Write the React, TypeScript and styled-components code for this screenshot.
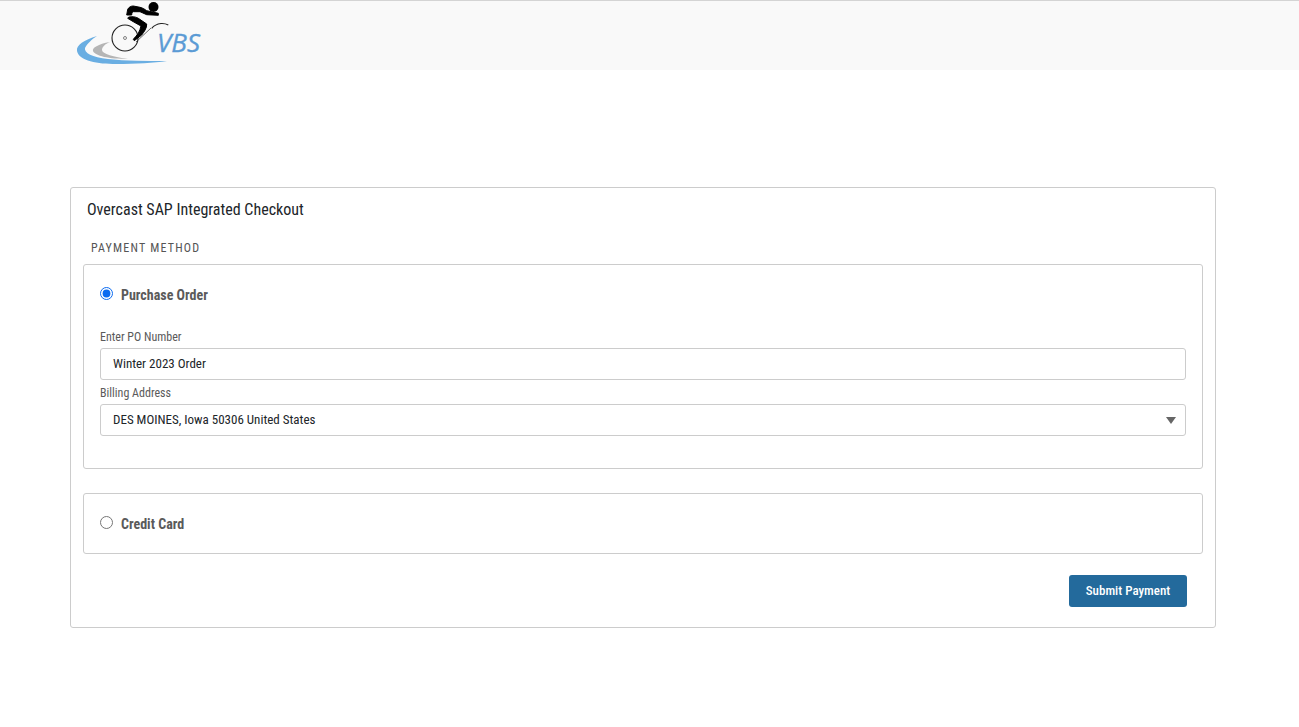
import React from "react";
import styled, { createGlobalStyle } from "styled-components";

const Global = createGlobalStyle`
  html, body { margin: 0; padding: 0; background: #fff; }
  body { font-family: "Roboto", "Liberation Sans", sans-serif; font-stretch: 75%; color: #212529; }
`;
const Header = styled.header`
  height: 69px; border-top: 1px solid #d4d4d4; background: #f9f9f9;
  padding-left: 76px; display: flex; align-items: flex-start;
`;
const Main = styled.main`
  padding: 117px 83px 0 70px;
`;
const Card = styled.section`
  height: 439px; border: 1px solid #ccc; border-radius: 3px;
  padding: 0 12px; display: flex; flex-direction: column;
`;
const Title = styled.h1`
  margin: 12px 0 0 4px; font-size: 16px; line-height: 19px; font-weight: 400; color: #212529;
`;
const Section = styled.div`
  margin: 22px 0 9px 8px; font-size: 12px; line-height: 14px; letter-spacing: 1.2px;
  text-transform: uppercase; color: #555;
`;
const Panel = styled.div<{ $h: number }>`
  height: ${p => p.$h}px; box-sizing: border-box; border: 1px solid #ccc; border-radius: 3px;
  padding: 0 16px; margin-bottom: 24px;
`;
const RadioRow = styled.label`
  display: flex; align-items: center; gap: 8px; height: 59px; font-size: 14px; font-weight: 700; color: #5a5a5a;
`;
const Radio = styled.input.attrs({ type: "radio" })`
  margin: -3px 0 0 0; width: 13px; height: 13px; accent-color: #0b6bf0;
`;
const Field = styled.div`
  margin-bottom: 6px;
`;
const FieldGap = styled.div`
  height: 6px;
`;
const Label = styled.div`
  font-size: 12px; line-height: 14px; color: #5a5a5a; margin-bottom: 4px;
`;
const Control = styled.div`
  position: relative; height: 32px; box-sizing: border-box; border: 1px solid #ccc; border-radius: 3px;
  padding: 0 12px 2px; display: flex; align-items: center; font-size: 13px; color: #212529;
`;
const Caret = styled.span`
  position: absolute; right: 9px; top: 12px; width: 0; height: 0;
  border-left: 5px solid transparent; border-right: 5px solid transparent; border-top: 7px solid #666;
`;
const Actions = styled.div`
  display: flex; justify-content: flex-end; padding-right: 16px; margin-top: -3px;
`;
const Button = styled.button`
  width: 118px; height: 32px; padding: 0 0 2px; border: 0; border-radius: 3px; background: #236a9c; color: #fff;
  font: inherit; font-size: 13px; font-weight: 500; font-stretch: 75%;
`;

const Logo = () => (
  <svg width="128" height="68" viewBox="0 0 128 68">
    <path d="M21 35C8 39 0 44 1 50 3 60 22 63 40 63 60 63 78 62 91 60 70 60 50 60 32 58 16 56 8 52 9 47 11 43 16 38 21 35Z" fill="#6aaee2" />
    <path d="M34 41C22 43 16 47 17 50 19 55 33 58 52 58 38 56 26 53 26 49 26 46 29 43 34 41Z" fill="#b5b5b5" />
    <circle cx="49" cy="37" r="13" fill="none" stroke="#222" strokeWidth="1.1" />
    <circle cx="49" cy="37" r="1.5" fill="none" stroke="#666" strokeWidth="0.8" />
    <path d="M75.7 27.3C78 24.5 81 23 85 22.5 88 22.3 90.5 23 92.3 24" fill="none" stroke="#222" strokeWidth="1.1" />
    <path d="M75 27 60 41" fill="none" stroke="#444" strokeWidth="0.8" />
    <circle cx="77.5" cy="6" r="5" fill="#000" />
    <g fill="#000" stroke="#000" strokeWidth="1" strokeLinejoin="round">
      <path d="M50.7 14 51.7 8.3C53 6 55 5 57.3 5L64 6.3C67 7 69 8.5 70.7 9.7L82.3 12.3V14.3L70.7 13.7 64 10.7H57.3C56 11 55.7 12.5 55.7 14Z" />
      <path d="M55.7 15.7C58 15.7 60.5 16.2 62.3 17.3L70.7 23C71 27 68 31 65.7 34L58.3 39.7 57.3 38.3C59 36 61 34.5 62.3 32.3 63.5 30 64.5 27.5 65 25L57.3 20.7 51.7 17.3C52 16 54 15.7 55.7 15.7Z" />
    </g>
    <text x="81" y="51" fontFamily="'Open Sans','Liberation Sans',sans-serif" fontSize="26" fontStyle="italic" fill="#5b9bd5" stroke="#5b9bd5" strokeWidth="0.35" style={{ fontStretch: "100%" }}>VBS</text>
  </svg>
);

export default function App() {
  return (
    <>
      <Global />
      <Header><Logo /></Header>
      <Main>
        <Card>
          <Title>Overcast SAP Integrated Checkout</Title>
          <Section>Payment Method</Section>
          <Panel $h={205}>
            <RadioRow><Radio name="pay" defaultChecked />Purchase Order</RadioRow>
            <FieldGap />
            <Field>
              <Label>Enter PO Number</Label>
              <Control>Winter 2023 Order</Control>
            </Field>
            <Field>
              <Label>Billing Address</Label>
              <Control>DES MOINES, Iowa 50306 United States<Caret /></Control>
            </Field>
          </Panel>
          <Panel $h={61}>
            <RadioRow><Radio name="pay" />Credit Card</RadioRow>
          </Panel>
          <Actions><Button>Submit Payment</Button></Actions>
        </Card>
      </Main>
    </>
  );
}
